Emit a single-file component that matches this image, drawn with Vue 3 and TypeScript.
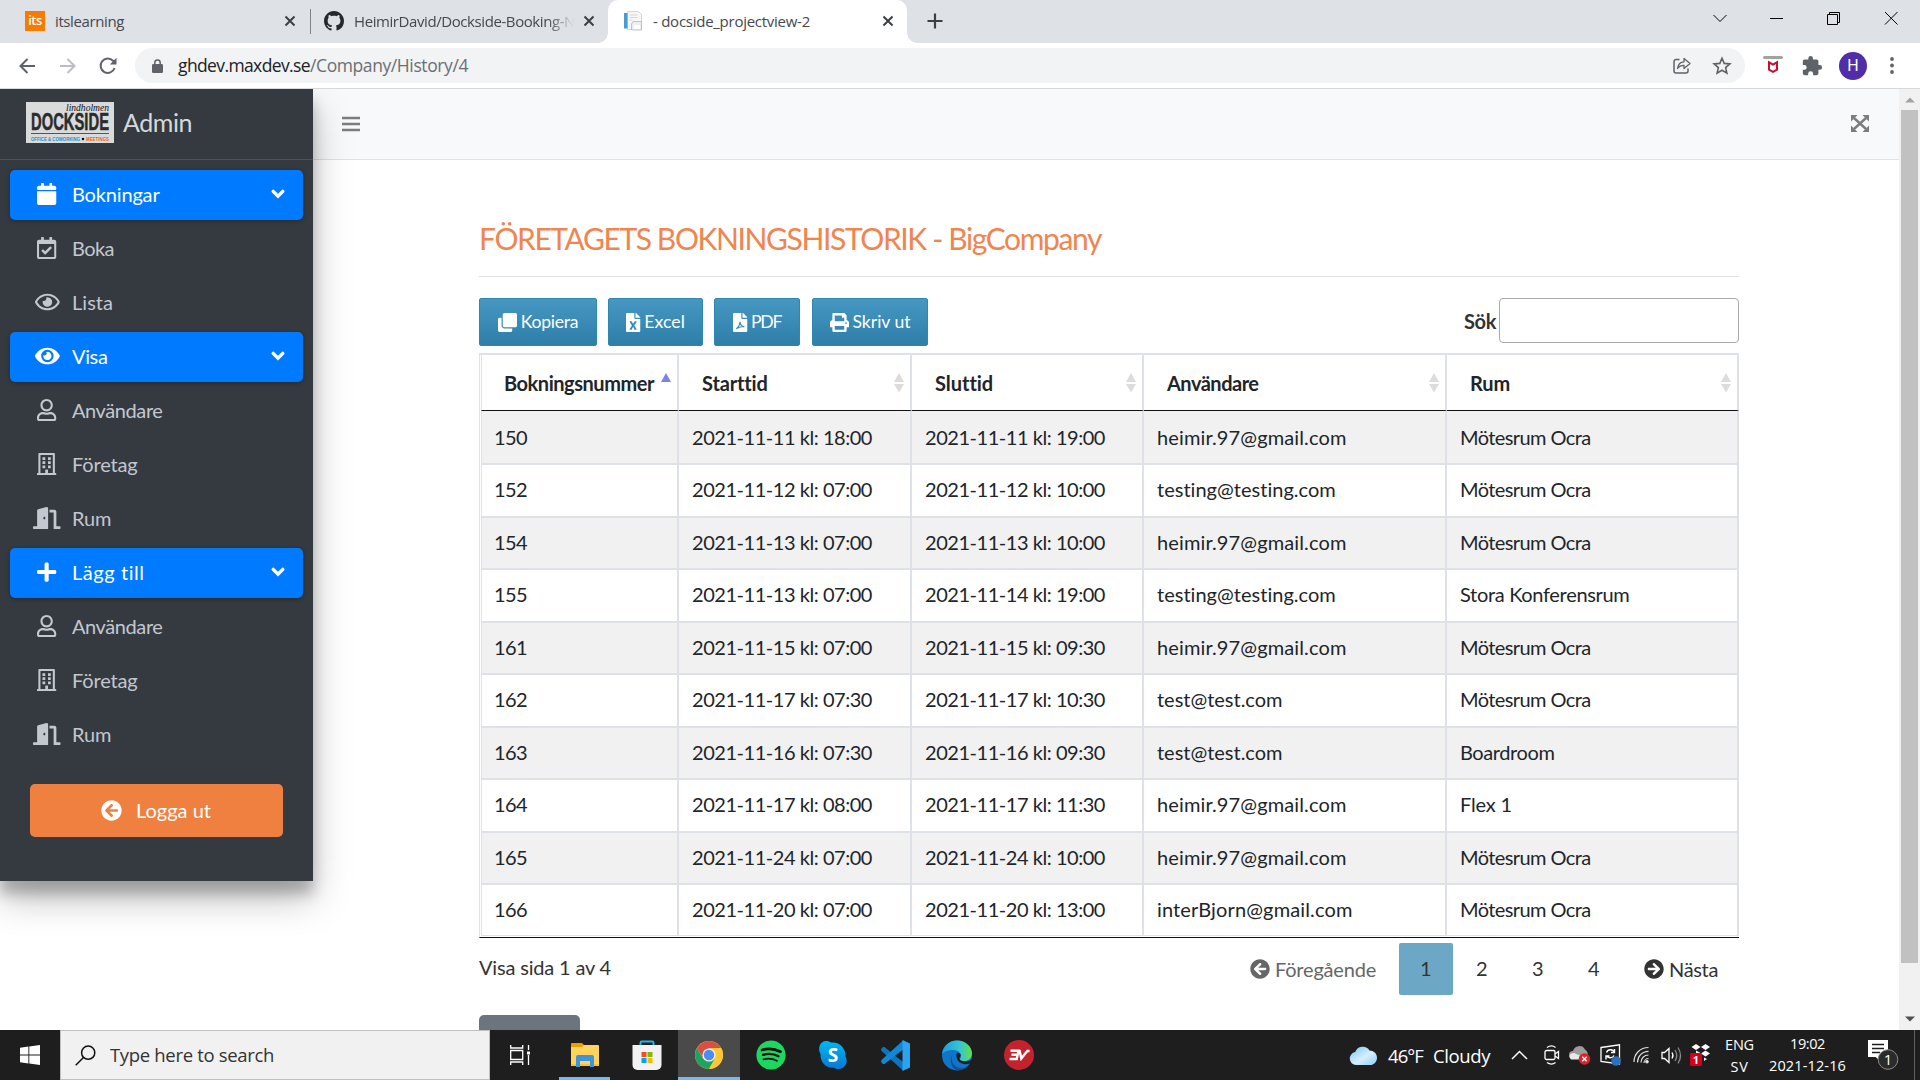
<script setup lang="ts">
import type { Directive } from 'vue'

// Tracks a label in or out so that it occupies the given width in pixels.
const vFit: Directive<HTMLElement, number> = {
  mounted(el, { value }) {
    const natural = el.getBoundingClientRect().width
    const count = (el.textContent ?? '').length
    if (value && count) el.style.letterSpacing = `${((value - natural) / count).toFixed(3)}px`
  },
}

interface Glyph { w: number; d: string }

const fileBody = 'M224 136V0H24C10.7 0 0 10.7 0 24v464c0 13.3 10.7 24 24 24h336c13.3 0 24-10.7 24-24V160H248c-13.2 0-24-10.8-24-24z'
const fileFold = 'M384 121.9v6.1H256V0h6.1c6.4 0 12.5 2.5 17 7l97.9 98c4.5 4.5 7 10.6 7 16.9z'

const glyphs: Record<string, Glyph> = {
  calendar: { w: 448, d: 'M12 192h424c6.6 0 12 5.4 12 12v260c0 26.5-21.5 48-48 48H48c-26.5 0-48-21.5-48-48V204c0-6.6 5.4-12 12-12zm436-44v-36c0-26.5-21.5-48-48-48h-48V12c0-6.6-5.4-12-12-12h-40c-6.6 0-12 5.4-12 12v52H160V12c0-6.6-5.4-12-12-12h-40c-6.6 0-12 5.4-12 12v52H48C21.5 64 0 85.5 0 112v36c0 6.6 5.4 12 12 12h424c6.6 0 12-5.4 12-12z' },
  check: { w: 448, d: 'M400 64h-48V12c0-6.627-5.373-12-12-12h-40c-6.627 0-12 5.373-12 12v52H160V12c0-6.627-5.373-12-12-12h-40c-6.627 0-12 5.373-12 12v52H48C21.49 64 0 85.49 0 112v352c0 26.51 21.49 48 48 48h352c26.51 0 48-21.49 48-48V112c0-26.51-21.49-48-48-48zm-6 400H54a6 6 0 0 1-6-6V160h352v298a6 6 0 0 1-6 6zm-52.849-200.65L198.842 404.519c-4.705 4.667-12.303 4.637-16.971-.068l-75.091-75.699c-4.667-4.705-4.637-12.303.068-16.971l22.719-22.536c4.705-4.667 12.303-4.637 16.97.069l44.104 44.461 111.072-110.181c4.705-4.667 12.303-4.637 16.971.068l22.536 22.718c4.667 4.705 4.636 12.303-.069 16.97z' },
  eyeLine: { w: 576, d: 'M288 144a110.94 110.94 0 0 0-31.24 5 55.4 55.4 0 0 1 7.24 27 56 56 0 0 1-56 56 55.4 55.4 0 0 1-27-7.24A111.71 111.71 0 1 0 288 144zm284.52 97.4C518.29 135.59 410.93 64 288 64S57.68 135.64 3.48 241.41a32.35 32.35 0 0 0 0 29.19C57.71 376.41 165.07 448 288 448s230.32-71.64 284.52-177.41a32.35 32.35 0 0 0 0-29.19zM288 400c-98.65 0-189.09-55-237.93-144C98.91 167 189.34 112 288 112s189.09 55 237.93 144C477.1 345 386.66 400 288 400z' },
  eye: { w: 576, d: 'M572.52 241.4C518.29 135.59 410.93 64 288 64S57.68 135.64 3.48 241.41a32.35 32.35 0 0 0 0 29.19C57.71 376.41 165.07 448 288 448s230.32-71.64 284.52-177.41a32.35 32.35 0 0 0 0-29.19zM288 400a144 144 0 1 1 144-144 143.93 143.93 0 0 1-144 144zm0-240a95.31 95.31 0 0 0-25.31 3.79 47.85 47.85 0 0 1-66.9 66.9A95.78 95.78 0 1 0 288 160z' },
  user: { w: 448, d: 'M313.6 304c-28.7 0-42.5 16-89.6 16-47.1 0-60.8-16-89.6-16C60.2 304 0 364.2 0 438.4V464c0 26.5 21.5 48 48 48h352c26.5 0 48-21.5 48-48v-25.6c0-74.2-60.2-134.4-134.4-134.4zM400 464H48v-25.6c0-47.6 38.8-86.4 86.4-86.4 14.6 0 38.3 16 89.6 16 51.7 0 74.9-16 89.6-16 47.6 0 86.4 38.8 86.4 86.4V464zM224 288c79.5 0 144-64.5 144-144S303.5 0 224 0 80 64.5 80 144s64.5 144 144 144zm0-240c52.9 0 96 43.1 96 96s-43.1 96-96 96-96-43.1-96-96 43.1-96 96-96z' },
  building: { w: 448, d: 'M32 24A24 24 0 0 1 56 0H392A24 24 0 0 1 416 24V464H436A12 12 0 0 1 448 476V512H0V476A12 12 0 0 1 12 464H32ZM80 48V463H192V396A12 12 0 0 1 204 384H244A12 12 0 0 1 256 396V463H368V48ZM128 96h64v64h-64zM256 96h64v64h-64zM128 192h64v64h-64zM256 192h64v64h-64zM128 288h64v64h-64zM256 288h64v64h-64z' },
  door: { w: 640, d: 'M624 448h-80V113.45C544 86.19 522.47 64 496 64H384v64h96v384h144c8.84 0 16-7.16 16-16v-32c0-8.84-7.16-16-16-16zM312.24 1.01l-192 49.74C105.99 54.44 96 67.7 96 82.92V448H16c-8.84 0-16 7.16-16 16v32c0 8.84 7.16 16 16 16h336V33.18c0-21.58-19.56-37.41-39.76-32.17zM264 288c-13.25 0-24-14.33-24-32s10.75-32 24-32 24 14.33 24 32-10.75 32-24 32z' },
  plus: { w: 448, d: 'M416 208H272V64c0-17.67-14.33-32-32-32h-32c-17.67 0-32 14.33-32 32v144H32c-17.67 0-32 14.33-32 32v32c0 17.67 14.33 32 32 32h144v144c0 17.67 14.33 32 32 32h32c17.67 0 32-14.33 32-32V304h144c17.67 0 32-14.33 32-32v-32c0-17.67-14.33-32-32-32z' },
  circleLeft: { w: 512, d: 'M256 504C119 504 8 393 8 256S119 8 256 8s248 111 248 248-111 248-248 248zm28.9-143.6L209.4 288H392c13.3 0 24-10.7 24-24v-16c0-13.3-10.7-24-24-24H209.4l75.5-72.4c9.7-9.3 9.9-24.8.4-34.3l-11-10.9c-9.4-9.4-24.6-9.4-33.9 0L107.7 239c-9.4 9.4-9.4 24.6 0 33.9l132.7 132.7c9.4 9.4 24.6 9.4 33.9 0l11-10.9c9.5-9.5 9.3-25-.4-34.3z' },
  clone: { w: 512, d: 'M464 0c26.51 0 48 21.49 48 48v288c0 26.51-21.49 48-48 48H176c-26.51 0-48-21.49-48-48V48c0-26.51 21.49-48 48-48h288M176 416c-44.112 0-80-35.888-80-80V128H48c-26.51 0-48 21.49-48 48v288c0 26.51 21.49 48 48 48h288c26.51 0 48-21.49 48-48v-48H176z' },
  excel: { w: 384, d: fileBody + 'm60.1 106.5L224 336l60.1 93.5c5.1 8-.6 18.5-10.1 18.5h-34.9c-4.4 0-8.5-2.4-10.6-6.3C208.9 405.5 192 373 192 373c-6.4 14.8-10 20-36.6 68.8-2.1 3.9-6.1 6.3-10.5 6.3H110c-9.5 0-15.2-10.5-10.1-18.5l60.3-93.5-60.3-93.5c-5.2-8 .6-18.5 10.1-18.5h34.8c4.4 0 8.5 2.4 10.6 6.3 26.1 48.8 20 33.6 36.6 68.5 0 0 6.1-11.7 36.6-68.5 2.1-3.9 6.2-6.3 10.6-6.3H274c9.5-.1 15.2 10.4 10.1 18.4z' + fileFold },
  pdf: { w: 384, d: fileBody + fileFold },
  print: { w: 512, d: 'M448 192V77.25c0-8.49-3.37-16.62-9.37-22.63L393.37 9.37c-6-6-14.14-9.37-22.63-9.37H96C78.33 0 64 14.33 64 32v160c-35.35 0-64 28.65-64 64v112c0 8.84 7.16 16 16 16h48v96c0 17.67 14.33 32 32 32h320c17.67 0 32-14.33 32-32v-96h48c8.84 0 16-7.16 16-16V256c0-35.35-28.65-64-64-64zm-64 256H128v-96h256v96zm0-224H128V64h192v48c0 8.84 7.16 16 16 16h48v96zm48 72c-13.25 0-24-10.75-24-24 0-13.26 10.75-24 24-24s24 10.74 24 24c0 13.25-10.75 24-24 24z' },
}

interface NavItem { icon: string; label: string; width: number; group?: boolean }
const nav: NavItem[] = [
  { icon: 'calendar', label: 'Bokningar', width: 87.5, group: true },
  { icon: 'check', label: 'Boka', width: 42 },
  { icon: 'eyeLine', label: 'Lista', width: 41 },
  { icon: 'eye', label: 'Visa', width: 35.5, group: true },
  { icon: 'user', label: 'Användare', width: 90.5 },
  { icon: 'building', label: 'Företag', width: 65.5 },
  { icon: 'door', label: 'Rum', width: 39.5 },
  { icon: 'plus', label: 'Lägg till', width: 73, group: true },
  { icon: 'user', label: 'Användare', width: 90.5 },
  { icon: 'building', label: 'Företag', width: 65.5 },
  { icon: 'door', label: 'Rum', width: 39.5 },
]

const tools = [
  { icon: 'clone', label: 'Kopiera', box: 118, width: 57.5 },
  { icon: 'excel', label: 'Excel', box: 95, width: 41 },
  { icon: 'pdf', label: 'PDF', box: 86, width: 30.5 },
  { icon: 'print', label: 'Skriv ut', box: 116, width: 58 },
]

const columns = [
  { label: 'Bokningsnummer', width: 150, sorted: true },
  { label: 'Starttid', width: 65 },
  { label: 'Sluttid', width: 57.5 },
  { label: 'Användare', width: 91.5 },
  { label: 'Rum', width: 40 },
]

const textWidths: Record<string, number> = {
  'heimir.97@gmail.com': 189.5,
  'testing@testing.com': 179.5,
  'test@test.com': 125.5,
  'interBjorn@gmail.com': 195.5,
  'Mötesrum Ocra': 130.5,
  'Stora Konferensrum': 169.5,
  Boardroom: 94.5,
  'Flex 1': 52,
}
const widthOf = (cell: string): number => textWidths[cell] ?? (cell.length === 3 ? 33 : 180)

const rows: string[][] = [
  ['150', '2021-11-11 kl: 18:00', '2021-11-11 kl: 19:00', 'heimir.97@gmail.com', 'Mötesrum Ocra'],
  ['152', '2021-11-12 kl: 07:00', '2021-11-12 kl: 10:00', 'testing@testing.com', 'Mötesrum Ocra'],
  ['154', '2021-11-13 kl: 07:00', '2021-11-13 kl: 10:00', 'heimir.97@gmail.com', 'Mötesrum Ocra'],
  ['155', '2021-11-13 kl: 07:00', '2021-11-14 kl: 19:00', 'testing@testing.com', 'Stora Konferensrum'],
  ['161', '2021-11-15 kl: 07:00', '2021-11-15 kl: 09:30', 'heimir.97@gmail.com', 'Mötesrum Ocra'],
  ['162', '2021-11-17 kl: 07:30', '2021-11-17 kl: 10:30', 'test@test.com', 'Mötesrum Ocra'],
  ['163', '2021-11-16 kl: 07:30', '2021-11-16 kl: 09:30', 'test@test.com', 'Boardroom'],
  ['164', '2021-11-17 kl: 08:00', '2021-11-17 kl: 11:30', 'heimir.97@gmail.com', 'Flex 1'],
  ['165', '2021-11-24 kl: 07:00', '2021-11-24 kl: 10:00', 'heimir.97@gmail.com', 'Mötesrum Ocra'],
  ['166', '2021-11-20 kl: 07:00', '2021-11-20 kl: 13:00', 'interBjorn@gmail.com', 'Mötesrum Ocra'],
]
</script>

<template>
  <div class="screen">
    <div class="tabs">
      <div class="tab first">
        <span class="its">its</span>
        <span v-fit="69" class="tab-title">itslearning</span>
        <svg class="x" viewBox="0 0 12 12"><path d="M1.5 1.5l9 9m0-9l-9 9" /></svg>
      </div>
      <i class="tab-sep"></i>
      <div class="tab second">
        <svg width="20" height="20" viewBox="0 0 16 16"><path fill="#24292f" d="M8 0C3.58 0 0 3.58 0 8c0 3.54 2.29 6.53 5.47 7.59.4.07.55-.17.55-.38 0-.19-.01-.82-.01-1.49-2.01.37-2.53-.49-2.69-.94-.09-.23-.48-.94-.82-1.13-.28-.15-.68-.52-.01-.53.63-.01 1.08.58 1.23.82.72 1.21 1.87.87 2.33.66.07-.52.28-.87.51-1.07-1.78-.2-3.64-.89-3.64-3.95 0-.87.31-1.59.82-2.15-.08-.2-.36-1.02.08-2.12 0 0 .67-.21 2.2.82.64-.18 1.32-.27 2-.27s1.36.09 2 .27c1.53-1.04 2.2-.82 2.2-.82.44 1.1.16 1.92.08 2.12.51.56.82 1.27.82 2.15 0 3.07-1.87 3.75-3.65 3.95.29.25.54.73.54 1.48 0 1.07-.01 1.93-.01 2.2 0 .21.15.46.55.38A8.01 8.01 0 0 0 16 8c0-4.42-3.58-8-8-8z" /></svg>
        <span class="fade"><span v-fit="221" class="tab-title">HeimirDavid/Dockside-Booking-N</span></span>
        <svg class="x" viewBox="0 0 12 12"><path d="M1.5 1.5l9 9m0-9l-9 9" /></svg>
      </div>
      <div class="tab active">
        <svg width="20" height="20" viewBox="0 0 20 20">
          <path fill="#f6f6f6" stroke="#c9cdd2" stroke-width=".8" d="M4.500 .5h11l3 3v15h-14z" />
          <path fill="#4a9bd0" d="M1 2h3.500v15.500H1z" />
          <path stroke="#d5d9de" d="M6.500 4h8M6.500 6.500h8M6.500 9h3" />
          <path fill="#eceef2" stroke="#b4b8c0" stroke-width=".8" d="M10 10.500h8.500v8.500H8.500V13z" />
          <path fill="#fff" d="M11 14h6v4h-6z" />
        </svg>
        <span v-fit="157" class="tab-title">- docside_projectview-2</span>
        <svg class="x" viewBox="0 0 12 12"><path d="M1.500 1.500l9 9m0-9l-9 9" /></svg>
      </div>
      <svg class="new-tab" width="16" height="16" viewBox="0 0 16 16"><path d="M8 .5v15M.5 8h15" stroke="#3c4043" stroke-width="2.200" /></svg>
      <svg class="win" width="184" height="20" viewBox="0 0 184 20" fill="none" stroke="#000">
        <path d="M.5 7l6.500 6.500 6.500-6.500" />
        <path d="M58 10.500h13M115.500 6.500h10v10h-10zM117.500 6.500v-2h10v10h-2M173 4l12.500 12.500m0-12.500L173 16.500" transform="translate(-1)" />
      </svg>
    </div>

    <div class="toolbar">
      <svg class="back" width="16" height="16" viewBox="0 0 16 16"><path d="M16 8H1.500M8.500 1L1.500 8l7 7" /></svg>
      <svg class="fwd" width="16" height="16" viewBox="0 0 16 16"><path d="M0 8h14.500M7.500 1l7 7-7 7" /></svg>
      <svg class="reload" width="18" height="18" viewBox="0 0 18 18"><path d="M15.600 11A7.200 7.200 0 1 1 14 3.700L16 6" /><path d="M17.500 .8v6.700h-6.700z" class="solid" /></svg>
      <div class="omnibox">
        <svg class="lock" width="11" height="14" viewBox="0 0 11 14"><path d="M2.800 6V3.700a2.700 2.700 0 0 1 5.400 0V6" fill="none" stroke="#5f6368" stroke-width="1.500" /><rect y="5" width="11" height="9" rx="1.200" fill="#5f6368" /></svg>
        <span v-fit="132" class="host">ghdev.maxdev.se</span><span v-fit="158" class="path">/Company/History/4</span>
        <svg class="share" width="18" height="17" viewBox="0 0 18 17" fill="none" stroke="#5f6368" stroke-width="1.500"><path d="M6.500 2.500H3a2 2 0 0 0-2 2V14a2 2 0 0 0 2 2h10a2 2 0 0 0 2-2v-2.500" /><path d="M4.500 11.500C5 7 7.500 5 11 4.800V1.500L17 6.500l-6 5V8.300C8 8.200 6 9.300 4.500 11.500z" stroke-width="1.300" stroke-linejoin="round" /></svg>
        <svg class="star" width="18" height="18" viewBox="0 0 18 18" fill="none" stroke="#5f6368" stroke-width="1.600"><path d="M9 1.200l2.200 5.200 5.700.5-4.300 3.700 1.300 5.600L9 13.300l-4.900 2.900 1.300-5.600L1.100 6.900l5.700-.5z" /></svg>
      </div>
      <svg class="mcafee" width="20" height="17" viewBox="0 0 20 17"><rect width="20" height="3" rx="1.500" fill="#a5a19f" /><path d="M6 6.300v7.400l4 2.200 4-2.200V6.300l-4 2.300z" fill="none" stroke="#c8102e" stroke-width="2" /></svg>
      <svg class="puzzle" width="22" height="22" viewBox="0 0 24 24"><path fill="#5f6368" d="M20.500 11H19V7c0-1.100-.9-2-2-2h-4V3.500a2.500 2.500 0 0 0-5 0V5H4c-1.100 0-2 .9-2 2v3.800h1.500a2.700 2.700 0 0 1 0 5.400H2V20c0 1.100.9 2 2 2h3.800v-1.500a2.700 2.700 0 0 1 5.400 0V22H17c1.100 0 2-.9 2-2v-4h1.500a2.500 2.500 0 0 0 0-5z" /></svg>
      <span class="avatar">H</span>
      <svg class="dots" width="4" height="17" viewBox="0 0 4 17"><circle cx="2" cy="2" r="1.900" /><circle cx="2" cy="8.500" r="1.900" /><circle cx="2" cy="15" r="1.900" /></svg>
    </div>

    <div class="page">
      <aside class="sidebar">
        <div class="brand">
          <svg width="88" height="41" viewBox="0 0 88 41">
            <rect width="88" height="41" fill="#d9dadb" />
            <text x="5" y="28" class="dock" textLength="78" lengthAdjust="spacingAndGlyphs">DOCKSIDE</text>
            <text x="40" y="8.500" class="script" textLength="43" lengthAdjust="spacingAndGlyphs">lindholmen</text>
            <path d="M5 31.500h78" stroke="#555" stroke-width="1" />
            <text x="5" y="39.300" class="tiny" fill="#2d8fc0" textLength="49" lengthAdjust="spacingAndGlyphs">OFFICE &amp; COWORKING</text>
            <circle cx="57" cy="37" r="1.200" />
            <text x="60" y="39.300" class="tiny" fill="#e5652b" textLength="23" lengthAdjust="spacingAndGlyphs">MEETINGS</text>
          </svg>
          <span v-fit="69" class="brand-name">Admin</span>
        </div>
        <nav>
          <div v-for="(item, i) in nav" :key="i" class="item" :class="{ group: item.group }">
            <span class="item-icon">
              <svg height="22" :width="(glyphs[item.icon].w * 22) / 512" :viewBox="`0 0 ${glyphs[item.icon].w} 512`"><path fill="currentColor" fill-rule="evenodd" :d="glyphs[item.icon].d" /></svg>
            </span>
            <span v-fit="item.width" class="item-label">{{ item.label }}</span>
            <svg v-if="item.group" class="chev" width="14" height="10" viewBox="0 0 14 10"><path d="M2.200 2.400L7 7.200l4.800-4.800" /></svg>
          </div>
        </nav>
        <div class="logout">
          <svg width="21" height="21" viewBox="0 0 512 512"><path fill="#fff" :d="glyphs.circleLeft.d" /></svg>
          <span v-fit="75" class="item-label">Logga ut</span>
        </div>
      </aside>

      <main>
        <header>
          <svg width="18" height="16" viewBox="0 0 18 16"><path d="M0 2h18M0 8h18M0 14h18" stroke="#7c7d7d" stroke-width="2.600" /></svg>
          <svg width="18" height="17" viewBox="0 0 18 17"><path d="M3 3l12 11M15 3L3 14" stroke="#7c7d7d" stroke-width="2.400" /><path fill="#7c7d7d" d="M0 0h6.500L0 6.500zM18 0h-6.500L18 6.500zM0 17h6.500L0 10.500zM18 17h-6.500l6.500-6.500z" /></svg>
        </header>
        <section class="content">
          <h1><span v-fit="622">FÖRETAGETS BOKNINGSHISTORIK - BigCompany</span></h1>
          <div class="controls">
            <div v-for="t in tools" :key="t.label" class="tool" :style="{ width: t.box + 'px' }">
              <svg height="19" :width="(glyphs[t.icon].w * 19) / 512" :viewBox="`0 0 ${glyphs[t.icon].w} 512`">
                <path fill="#fff" :d="glyphs[t.icon].d" />
                <path v-if="t.icon === 'pdf'" d="M85 425c50-20 100-110 105-190 8 90 50 130 115 130-80-5-140 15-190 45" fill="none" stroke="#3c8cb6" stroke-width="32" />
              </svg>
              <span v-fit="t.width">{{ t.label }}</span>
            </div>
            <label><span v-fit="32">Sök</span><input type="text" /></label>
          </div>

          <div class="table">
            <div class="tr head">
              <div v-for="c in columns" :key="c.label" class="th">
                <span v-fit="c.width">{{ c.label }}</span>
                <svg width="12" height="20" viewBox="0 0 12 20">
                  <path d="M6 0l5 9H1z" :fill="c.sorted ? '#7f84e2' : '#dcdcdc'" />
                  <path v-if="!c.sorted" d="M6 19.500l5-8.500H1z" fill="#dcdcdc" />
                </svg>
              </div>
            </div>
            <div v-for="r in rows" :key="r[0]" class="tr">
              <div v-for="(cell, i) in r" :key="i" class="td"><span v-fit="widthOf(cell)">{{ cell }}</span></div>
            </div>
          </div>

          <div class="footer">
            <span v-fit="132" class="info">Visa sida 1 av 4</span>
            <div class="pager">
              <span class="prev"><svg width="20" height="20" viewBox="0 0 512 512"><path fill="currentColor" :d="glyphs.circleLeft.d" /></svg><span v-fit="101">Föregående</span></span>
              <span class="num current">1</span>
              <span class="num">2</span>
              <span class="num">3</span>
              <span class="num">4</span>
              <span class="next"><svg width="20" height="20" viewBox="0 0 512 512"><path fill="currentColor" transform="translate(512) scale(-1 1)" :d="glyphs.circleLeft.d" /></svg><span v-fit="49">Nästa</span></span>
            </div>
          </div>
          <div class="grey-button"></div>
        </section>
      </main>

      <div class="scrollbar">
        <svg width="10" height="6" viewBox="0 0 10 6"><path d="M0 5.500L5 .5l5 5z" fill="#a3a3a3" /></svg>
        <i></i>
        <svg width="10" height="6" viewBox="0 0 10 6"><path d="M0 .5l5 5 5-5z" fill="#505050" /></svg>
      </div>
    </div>

    <div class="taskbar">
      <div class="start"><svg width="20" height="20" viewBox="0 0 20 20"><path fill="#fff" d="M0 2.800l8.400-1.200v8H0zM9.300 1.400L20 0v9.600H9.300zM0 10.500h8.400v8L0 17.300zM9.300 10.500H20V20L9.300 18.600z" /></svg></div>
      <div class="search">
        <svg width="21" height="21" viewBox="0 0 21 21" fill="none" stroke="#111" stroke-width="1.500"><circle cx="13.200" cy="7.700" r="6.600" /><path d="M8.500 12.500L.7 20.300" /></svg>
        <span v-fit="164">Type here to search</span>
      </div>
      <div class="app view"><svg width="20" height="20" viewBox="0 0 20 20" fill="none" stroke="#fff" stroke-width="1.300"><path d="M.7 0v3h12V0M.7 5.500h12v9H.7zM.7 20v-3h12v3M18.500 0v5M18.500 10v10" /><path d="M17 6.500h3v3h-3z" fill="#fff" stroke="none" /></svg></div>
      <div class="app running">
        <svg width="28" height="24" viewBox="0 0 28 24"><path fill="#e8a000" d="M0 1a1 1 0 0 1 1-1h10l2 2v3H0z" /><path fill="#ffd35c" d="M0 4h11l2-2h14a1 1 0 0 1 1 1v20H0z" /><path fill="#f7c238" d="M0 21h28v2H0z" /><path fill="#3e93d9" d="M5 24V14a2 2 0 0 1 2-2h14a2 2 0 0 1 2 2v10h-4v-6H9v6z" /></svg>
      </div>
      <div class="app">
        <svg width="30" height="30" viewBox="0 0 30 30"><path d="M8.500 6V2.700c0-.7.500-1.200 1.200-1.200h10.600c.7 0 1.200.5 1.200 1.200V6" fill="none" stroke="#24b2f0" stroke-width="2" /><path fill="#f2f2f2" d="M.5 5h29v20a5 5 0 0 1-5 5h-19a5 5 0 0 1-5-5z" /><path fill="#f25022" d="M9.500 12h5v5h-5z" /><path fill="#7fba00" d="M15.500 12h5v5h-5z" /><path fill="#00a4ef" d="M9.500 18h5v5h-5z" /><path fill="#ffb900" d="M15.500 18h5v5h-5z" /></svg>
      </div>
      <div class="app focus">
        <svg width="28" height="28" viewBox="0 0 28 28"><circle cx="14" cy="14" r="14" fill="#fcc934" /><path fill="#d94f43" d="M1.900 7A14 14 0 0 1 26.100 7H14l-6 10z" /><path fill="#1ea362" d="M1.900 7A14 14 0 0 0 14 28l6-10.500-12 0z" /><path fill="#fcc934" d="M26.100 7A14 14 0 0 1 14 28l6-10.500L14 7z" /><circle cx="14" cy="14" r="6.600" fill="#f1f1f1" /><circle cx="14" cy="14" r="5.200" fill="#4c8bf5" /></svg>
      </div>
      <div class="app">
        <svg width="30" height="30" viewBox="0 0 30 30"><circle cx="15" cy="15" r="14.600" fill="#1ed760" /><g fill="none" stroke="#111" stroke-linecap="round"><path d="M6 10c6-1.800 13-1.200 18.500 1.700" stroke-width="2.700" /><path d="M7 14.800c5.500-1.500 11-1 15.500 1.500" stroke-width="2.300" /><path d="M7.500 19.300c4.500-1.200 9.300-.8 13.300 1.500" stroke-width="1.900" /></g></svg>
      </div>
      <div class="app">
        <svg width="30" height="30" viewBox="0 0 30 30"><defs><linearGradient id="sk" x2="0" y2="1"><stop stop-color="#00b7f0" /><stop offset="1" stop-color="#0a78d4" /></linearGradient></defs><path fill="url(#sk)" d="M8 1c2 0 4 .6 5.200 1.500C21 1.500 28 8 27.500 16.500c3.500 6-1.300 12.500-7 12.500-2 0-3.500-.5-4.700-1.300C8 28.500 2 22 2.500 14-1 8 2.500 1 8 1z" /><text x="15" y="22" text-anchor="middle" class="skype">S</text></svg>
      </div>
      <div class="app">
        <svg width="30" height="31" viewBox="0 0 30 31"><path fill="#0b75c0" d="M1 9l2-2h1.500L23 22v8.500L1.500 11z" /><path fill="#1088d6" d="M1 22l2 2h1.500L23 9.500V.5L1.500 20z" /><path fill="#2ba3f3" d="M22.500 0L30 3.500v24L22.500 31z" /></svg>
      </div>
      <div class="app">
        <svg width="30" height="31" viewBox="0 0 30 31"><defs><linearGradient id="ed"><stop stop-color="#1b9de2" /><stop offset=".6" stop-color="#36c6d0" /><stop offset="1" stop-color="#63e04c" /></linearGradient></defs><circle cx="15" cy="15.500" r="15" fill="#1074c9" /><path fill="url(#ed)" d="M0 14C1 6 7 .5 15 .5c8.500 0 15 6 15 13 0 5-4 7.500-8 7.500-3 0-4.500-1-4.300-2 2-1 2-5-.7-7-4-3-13-2.500-17 2z" /><path fill="#11509f" d="M10 15c-2 7 3 13 9.500 13 4 0 7-1.500 9-5-2.500 4.500-7 7.500-13.500 7.500C9.500 29 7 20 10 15z" /><path fill="#1e1e1e" d="M14.500 14c1-2.500 4.500-1 4 1.500-.2 1.500-1.200 2-1 3.300.4 2 3.500 3 6.500 2.700 2.200-.2 4-1 5.500-1.800l1 3-4 1c-7 2-13-3-12-9.700z" /></svg>
      </div>
      <div class="app">
        <svg width="30" height="30" viewBox="0 0 30 30"><circle cx="15" cy="15" r="15" fill="#c4232d" /><path d="M6.500 10.700h8l-1.800 8.300H5.500M7.500 14.800h6M15.500 10l1.800 8.600 6-7.600h2.200" fill="none" stroke="#fff" stroke-width="2.400" /></svg>
      </div>

      <div class="tray">
        <svg class="t-cloud" width="28" height="20" viewBox="0 0 28 20"><defs><linearGradient id="cl" x2="1" y2="1"><stop stop-color="#74c2f4" /><stop offset=".55" stop-color="#d6effd" /><stop offset="1" stop-color="#8ecdf5" /></linearGradient></defs><path fill="url(#cl)" d="M7 20a6.500 6.500 0 0 1-.8-12.900A8 8 0 0 1 20.500 5.500c4 0 7.500 3 7.500 7.200 0 4-3 7.300-7 7.300z" /></svg>
        <span v-fit="35" class="weather">46°F</span>
        <span v-fit="57" class="weather cloudy">Cloudy</span>
        <svg class="t-up" width="17" height="10" viewBox="0 0 17 10"><path d="M1 9l7.500-7.500L16 9" fill="none" stroke="#fff" stroke-width="1.500" /></svg>
        <svg class="t-meet" width="16" height="20" viewBox="0 0 16 20" fill="none" stroke="#fff" stroke-width="1.300"><path d="M3 2.500c3-2 6-2 8.500 0M3 17.500c3 2 6 2 8.500 0" /><rect x="1" y="5.500" width="10" height="9" rx="1.500" /><path d="M11 9l3.500-2.500v7L11 11" /></svg>
        <svg class="t-drive" width="22" height="20" viewBox="0 0 22 20"><path fill="#9c9c9c" d="M4 14a4 4 0 0 1 0-8 6.500 6.500 0 0 1 12-1.500c3 2 3.500 5 2 9.500z" /><path fill="#e8e8e8" d="M2 14.500c-3-3-1-6.500 3-6.500l7 3-1 3.500z" /><circle cx="15.500" cy="14" r="5.800" fill="#d8232a" /><path d="M13.300 11.800l4.400 4.400m0-4.400l-4.400 4.400" stroke="#fff" stroke-width="1.500" /></svg>
        <svg class="t-box" width="21" height="22" viewBox="0 0 21 22"><path d="M1 3.500L19.500.8V20L1 17.500z" fill="none" stroke="#fff" stroke-width="1.300" /><path d="M6.500 8.500C8 5 13 5 14 8M14.500 5v3.500H11M14 11.500c-1.500 3-6 3-7.500.5M6 15.500V12h3.500" fill="none" stroke="#fff" stroke-width="1.400" /><circle cx="16" cy="17" r="4.800" fill="#2a72bd" /></svg>
        <svg class="t-wifi" width="17" height="18" viewBox="0 0 17 18" fill="none" stroke="#ddd" stroke-width="1.200"><path d="M1 16C1 8 7 1.500 15.500 1.500M4.500 16.500C4.500 10.500 9 5.300 15.500 5.300M8 16.500C8 12.500 11 9 15.500 9" /><path d="M11 17c0-2.500 2-4.500 4.500-4.500" /><circle cx="14" cy="15.700" r="1.200" fill="#fff" /></svg>
        <svg class="t-vol" width="21" height="19" viewBox="0 0 21 19" fill="none" stroke="#fff" stroke-width="1.300"><path d="M1 6.500h2.500L8 2.500v14l-4.500-4H1z" /><path d="M11 6.500q2 3 0 6" /><path stroke="#888" d="M14 4q3.500 5.500 0 11M17 1.500q5 8 0 16" /></svg>
        <svg class="t-drop" width="21" height="22" viewBox="0 0 21 22"><path fill="#fff" d="M6 0l4.500 3L6 6 1.500 3zM15.500 0L20 3l-4.500 3L11 3zM15.500 6.500l4.500 3-4.500 3-4.500-3zM6 6.500L10.500 9 6 12zM14 13.500l3 1.500-3 2z" /><rect y="9" width="12" height="13" rx="1.500" fill="#d6001c" /><text x="6" y="19.500" text-anchor="middle" class="badge">1</text></svg>
        <div class="stack lang"><span v-fit="29">ENG</span><span v-fit="18">SV</span></div>
        <div class="stack clock"><span v-fit="35">19:02</span><span v-fit="77">2021-12-16</span></div>
        <svg class="t-note" width="32" height="32" viewBox="0 0 32 32"><path fill="#fff" d="M0 1h20v17h-7.500v4l-5-4H0z" /><path d="M4 5.500h12M4 9.500h12M4 13.500h8" stroke="#1e1e1e" stroke-width="1.400" /><circle cx="20" cy="20.500" r="9.800" fill="#2b2b2b" stroke="#8c8c8c" /><text x="20" y="26" text-anchor="middle" class="count">1</text></svg>
        <i class="peek"></i>
      </div>
    </div>
  </div>
</template>

<style>
html,
body {
  margin: 0;
  overflow: hidden;
  background: #fff;
}
</style>

<style scoped>
.screen {
  width: 1920px;
  height: 1080px;
  display: flex;
  flex-direction: column;
  overflow: hidden;
  background: #fff;
  font-family: Lato, sans-serif;
  font-size: 20px;
  color: #212529;
}
.screen * { box-sizing: border-box; }
.screen svg { display: block; flex: none; overflow: visible; }
.screen span { white-space: pre; }

/* browser chrome */
.tabs, .toolbar, .taskbar { font-family: "Open Sans", sans-serif; }
.tabs { height: 43px; flex: none; display: flex; background: #dee1e6; font-size: 15px; color: #45494d; }
.tab { display: flex; align-items: center; height: 42px; }
.tab.first { width: 310px; padding-left: 25px; }
.its { width: 20px; height: 20px; background: #f57c00; color: #fff; font-size: 13px; line-height: 18px; letter-spacing: -0.6px; text-align: center; font-weight: 600; }
.its + .tab-title { margin-left: 10px; }
.tab-title { margin-top: -1px; }
.x { width: 12px; height: 12px; fill: none; stroke: #3c4043; stroke-width: 2; }
.tab.first .x { margin-left: auto; margin-right: 14px; }
.tab-sep { width: 1px; height: 25px; margin-top: 9px; background: #808387; }
.tab.second { width: 297px; padding-left: 13px; }
.fade { width: 220px; margin: -1px 0 0 10px; overflow: hidden; mask-image: linear-gradient(90deg, #000 88%, transparent); }
.tab.second .x { margin-left: 9px; }
.tab.active { position: relative; width: 299px; height: 43px; padding: 0 13px 1px 15px; background: #fff; border-radius: 10px 10px 0 0; }
.tab.active::before, .tab.active::after { content: ""; position: absolute; bottom: 0; width: 10px; height: 10px; }
.tab.active::before { left: -10px; background: radial-gradient(circle at 0 0, transparent 9.500px, #fff 10px); }
.tab.active::after { right: -10px; background: radial-gradient(circle at 100% 0, transparent 9.500px, #fff 10px); }
.tab.active .tab-title { margin-left: 10px; }
.tab.active .x { margin-left: auto; }
.new-tab { margin: 13px 0 0 20px; }
.win { margin: 8px 23px 0 auto; }

.toolbar { height: 46px; flex: none; display: flex; align-items: center; border-bottom: 1px solid #d6d8db; }
.toolbar > svg { fill: none; stroke: #5f6368; stroke-width: 2; }
.toolbar .back { margin-left: 19px; }
.toolbar .fwd { margin-left: 25px; stroke: #bcbec1; }
.toolbar .reload { margin-left: 23px; }
.reload .solid { fill: #5f6368; stroke: none; }
.omnibox { width: 1610px; height: 35px; margin-left: 18px; border-radius: 18px; background: #f1f3f4; display: flex; align-items: center; font-size: 17.5px; }
.lock { margin: 0 10px 0 17px; }
.omnibox .host, .omnibox .path { margin: -1px 0 0; }
.omnibox .host { margin-left: 5px; color: #202124; }
.path { color: #6b6f74; }
.share { margin-left: auto; }
.star { margin: 0 14px 0 22px; }
.toolbar > .mcafee, .toolbar > .puzzle, .toolbar > .dots { stroke: none; }
.toolbar > .dots { fill: #5f6368; margin-left: 23px; }
.mcafee { margin: -2px 0 0 18px; }
.puzzle { margin-left: 18px; }
.avatar { width: 28px; height: 28px; margin-left: 16px; border-radius: 50%; background: #512da8; color: #fff; font: 16px/28px Roboto, sans-serif; text-align: center; }

/* page */
.page { height: 941px; flex: none; display: flex; overflow: hidden; }
.sidebar { position: relative; z-index: 1; width: 313px; height: 792px; flex: none; background: #343a40; color: #c2c7d0; box-shadow: 0 17.5px 35px rgba(0, 0, 0, .25), 0 12.500px 12.500px rgba(0, 0, 0, .22); }
.brand { height: 71px; display: flex; align-items: center; padding: 0 0 3px 26px; border-bottom: 1px solid #4b545c; }
.brand-name { margin: -2px 0 0 9px; font-size: 25px; color: #d7d9db; }
.dock { font: bold 24px "Liberation Sans Narrow", "Liberation Sans", sans-serif; fill: #2b2b2b; stroke: #2b2b2b; stroke-width: .5; }
.script { font: italic 10px "Liberation Serif", serif; fill: #111; }
.tiny { font: bold 6px "Liberation Sans", sans-serif; }
nav { height: 617px; padding: 10px; display: flex; flex-direction: column; gap: 4px; }
.item { height: 50px; flex: none; display: flex; align-items: center; border-radius: 5px; }
.item.group { background: #007bff; color: #fff; box-shadow: 0 1px 4px rgba(0, 0, 0, .3); }
.item-icon { width: 42px; margin: -2px 4px 0 16px; display: flex; justify-content: center; }
.item-label { margin-top: -2px; }
.chev { margin: -3px 18px 0 auto; fill: none; stroke: #fff; stroke-width: 3.400; stroke-linecap: round; }
.logout { width: 253px; height: 53px; margin: 7px 0 0 30px; display: flex; align-items: center; padding-left: 71px; border-radius: 5px; background: #f08040; color: #fff; }
.logout svg { margin-right: 14px; }

main { width: 1586px; flex: none; }
header { height: 71px; display: flex; align-items: center; justify-content: space-between; padding: 0 30px 1px 29px; background: #f8f9fb; border-bottom: 1px solid #dee2e6; }
.content { width: 1260px; margin-left: 166px; }
h1 { height: 117px; margin: 0 0 21px; padding-top: 60px; border-bottom: 1px solid #e0e1e2; font-size: 30px; line-height: 36px; font-weight: 400; color: #f08550; }
.controls { height: 48px; display: flex; align-items: flex-start; gap: 11px; }
.tool { height: 48px; display: flex; align-items: center; justify-content: center; gap: 4px; border: 1px solid #2f86b3; border-radius: 2px; background: linear-gradient(#4697c2, #2d7fa8); color: #fff; font-size: 17.600px; }
.tool span { margin-top: -2px; }
.tool:nth-child(4) { margin-left: 1px; }
.controls label { margin-left: auto; display: flex; align-items: center; font-weight: 700; color: #333; gap: 3px; }
.controls input { width: 240px; height: 45px; border: 1px solid #aaa; border-radius: 4px; background: #fff; padding: 0; }

.table { height: 585px; margin-top: 7px; border-top: 2px solid #dee2e6; border-left: 1px solid #dee2e6; border-bottom: 1px solid #111; padding-left: 1px; overflow: hidden; }
.tr { display: grid; grid-template-columns: 198px 233px 232px 303px 292px; height: 52.5px; }
.tr > div { border-right: 2px solid #dee2e6; border-bottom: 2px solid #dee2e6; display: flex; align-items: center; padding-left: 13px; }
.tr > div:first-child { border-left: 1px solid #dee2e6; padding-left: 12px; }
.td span { margin-top: -2px; }
.tr:nth-child(even) > div { background: #f1f1f1; }
.tr:nth-child(2) { height: 54px; }
.tr:nth-child(2) > div { padding-top: 1.500px; }
.tr:last-child { height: 51px; }
.tr:last-child > div { border-bottom-width: 1px; }
.tr.head { height: 56px; }
.tr.head > .th, .tr.head > .th:first-child { border-bottom: 1px solid #111; padding: 4px 5px 0 23px; font-weight: 700; justify-content: space-between; }
.tr.head > .th:first-child { padding-left: 22px; }
.th span { margin-top: -4px; }
.th svg { margin-top: -4px; }

.footer { height: 77px; display: flex; justify-content: space-between; padding-top: 5px; color: #333; }
.info { line-height: 48px; }
.pager { display: flex; height: 52px; line-height: 50px; }
.prev, .next { display: flex; align-items: center; gap: 5px; }
.prev { color: #666; margin-right: 23px; }
.num { width: 53.500px; margin-right: 2.500px; text-align: center; border-radius: 2px; }
.num.current { background: #6ca8c6; }
.next { margin: 0 21px 0 21px; }
.grey-button { width: 101px; height: 47px; background: #6c757d; border-radius: 5px; }

.scrollbar { width: 21px; height: 941px; flex: none; background: #f1f1f1; display: flex; flex-direction: column; align-items: center; padding: 8px 0 8px; }
.scrollbar i { width: 17px; height: 853px; margin: 7px 0 auto; background: #c1c1c1; }

/* taskbar */
.taskbar { height: 50px; flex: none; display: flex; background: #1e1e1e; color: #fff; }
.start { width: 60px; display: flex; align-items: center; justify-content: center; }
.search { width: 430px; display: flex; align-items: center; border: 1px solid #bfbfbf; background: #f1f1f1; color: #333; padding-left: 14px; font-size: 18.500px; }
.search span { margin: -2px 0 0 14px; }
.app { width: 62px; display: flex; align-items: center; justify-content: center; }
.app.view { width: 64px; justify-content: flex-start; }
.app.view svg { margin-left: 20px; }
.running, .focus { border-bottom: 3px solid #76b9ed; padding-top: 3px; }
.app.running { width: 51px; margin: 0 6px 0 5px; }
.focus { background: #4a4a4a; }
.skype { font: bold 19px "Open Sans", sans-serif; fill: #fff; }
.tray { margin-left: auto; display: flex; align-items: center; }
.weather { font-size: 18.500px; margin-left: 11px; }
.cloudy { margin-left: 10px; }
.t-up { margin-left: 21px; }
.t-meet { margin-left: 16px; }
.t-drive { margin-left: 9px; }
.t-box { margin-left: 9px; }
.t-wifi { margin-left: 12px; }
.t-vol { margin-left: 11px; }
.t-drop { margin-left: 8px; }
.badge { font: bold 11px "Open Sans", sans-serif; fill: #fff; }
.stack { display: flex; flex-direction: column; align-items: center; font-size: 14.500px; line-height: 22px; }
.lang { margin: 1px 0 0 14px; width: 29px; }
.clock { margin-left: 15px; width: 77px; line-height: 22.500px; }
.t-note { margin-left: 22px; margin-right: 14px; }
.count { font: 15px "Open Sans", sans-serif; fill: #fff; }
.peek { width: 1px; height: 50px; background: #606060; margin-right: 5px; }
</style>
